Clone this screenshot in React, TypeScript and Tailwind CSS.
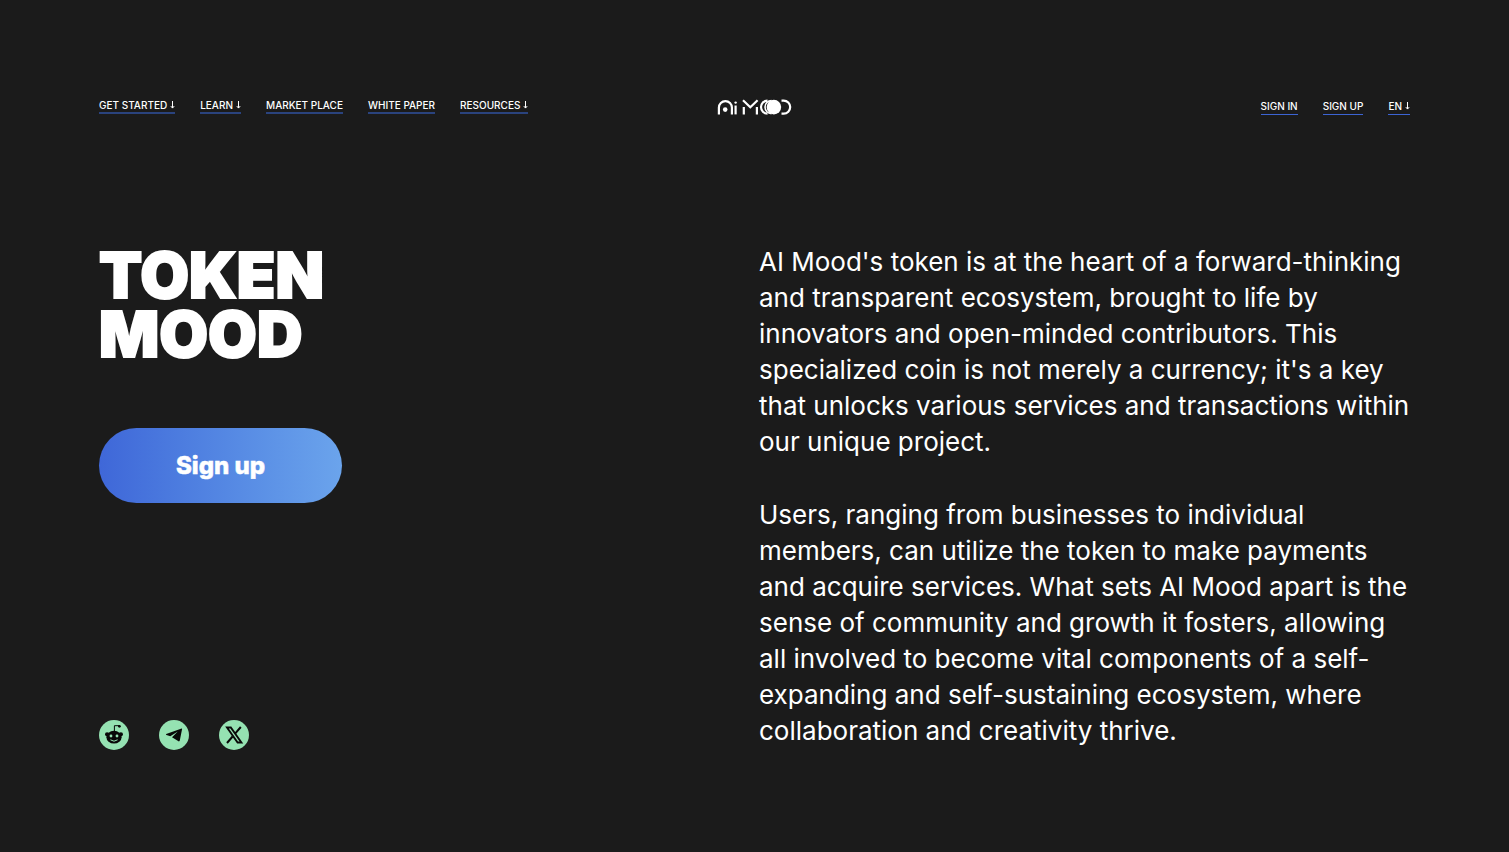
const mainLinks = [
  { label: "GET STARTED", menu: true },
  { label: "LEARN", menu: true },
  { label: "MARKET PLACE", menu: false },
  { label: "WHITE PAPER", menu: false },
  { label: "RESOURCES", menu: true },
];

function DownArrow() {
  return (
    <svg viewBox="0 0 5 8" className="mb-px h-2 w-[5px]" fill="none" stroke="currentColor" aria-hidden="true">
      <path d="M2.5 0v7" strokeWidth="1" />
      <path d="M0.8 5.1L2.5 7.1L4.2 5.1" strokeWidth="1" />
    </svg>
  );
}

function Logo() {
  return (
    <svg viewBox="717 98 76 17" className="h-[17px] w-[76px]" fill="none" stroke="white" strokeWidth="2.2" role="img" aria-label="Ai Mood">
      <path d="M718.9 114.4v-6.8a6.5 6.5 0 0 1 13 0v6.8" />
      <circle cx="725.2" cy="109.6" r="2.3" fill="white" stroke="none" />
      <path d="M735.6 105.5v8.9" />
      <circle cx="735.6" cy="102.6" r="1.2" fill="white" stroke="none" />
      <path d="M743.8 107v7.4M756.9 107v7.4M743 100.3l7.3 7l7.3-7" />
      <path d="M767.5 100.6a6.5 6.5 0 0 0 0 13" />
      <path d="M771.5 100.6a6.5 6.5 0 0 0 0 13" strokeWidth="1.6" />
      <circle cx="773.9" cy="107.1" r="7.3" fill="white" stroke="none" />
      <path d="M781.5 100.6h2.2a6.5 6.5 0 0 1 0 13h-2.2" />
    </svg>
  );
}

function RedditAlien() {
  return (
    <svg viewBox="0 0 30 30" className="size-[30px]" aria-hidden="true">
      <path d="M15.4 12V5.7H20" fill="none" stroke="currentColor" strokeWidth="1" />
      <circle cx="20.4" cy="6.3" r="1.4" fill="currentColor" />
      <circle cx="8.1" cy="14.3" r="2.1" fill="currentColor" />
      <circle cx="21.9" cy="14.3" r="2.1" fill="currentColor" />
      <ellipse cx="15" cy="17.2" rx="7.6" ry="6.4" fill="currentColor" />
      <circle cx="12" cy="16" r="1.4" fill="#95e2b2" />
      <circle cx="18" cy="16" r="1.4" fill="#95e2b2" />
      <path d="M11.4 19.8Q15 22.6 18.6 19.8" fill="none" stroke="#95e2b2" strokeWidth="1" />
    </svg>
  );
}

function Telegram() {
  return (
    <svg viewBox="0 0 30 30" className="size-[30px]" aria-hidden="true">
      <path d="M22.6 8.6L7.2 13.9Q6.5 14.5 7.5 15L11.3 16.2L18.8 11.5L13 17.3L19.5 21.3Q20.5 21.7 20.8 20.6L23.1 9.1Q23.1 8.5 22.6 8.6Z" fill="currentColor" />
    </svg>
  );
}

function XMark() {
  return (
    <svg viewBox="0 0 30 30" className="size-[30px]" fill="none" stroke="currentColor" aria-hidden="true">
      <path d="M8 7.5h3.8L22.4 22.5h-3.8Z" strokeWidth="1.9" />
      <path d="M21.8 7L16.3 13.3M13.6 16.5L8 23" strokeWidth="2" />
    </svg>
  );
}

const social = "flex size-[30px] items-center justify-center rounded-full bg-[#95e2b2] text-[#080808]";
const account = "flex h-[17px] items-center gap-[3px] border-b border-[#3c64d4] text-[10px] font-medium";

export default function App() {
  return (
    <div className="min-h-screen bg-[#1b1b1b] px-[99px] pt-[98px] pb-[101px] font-['Inter',sans-serif] text-white">
      <header className="grid grid-cols-[1fr_auto_1fr] items-start">
        <nav aria-label="Main" className="flex gap-[25px]">
          {mainLinks.map(({ label, menu }) => (
            <a key={label} href="#" className="flex h-4 items-center gap-[3px] border-b-2 border-[#2a437e] text-[10px] leading-[14px] font-medium whitespace-nowrap">
              {label}
              {menu && <DownArrow />}
            </a>
          ))}
        </nav>
        <a href="#" aria-label="Home"><Logo /></a>
        <nav aria-label="Account" className="flex justify-end gap-[25px]">
          <a href="#" className={account}>SIGN IN</a>
          <a href="#" className={account}>SIGN UP</a>
          <button type="button" className={account}>EN <DownArrow /></button>
        </nav>
      </header>

      <main className="mt-[129px] grid grid-cols-2 gap-[9px]">
        <section className="flex flex-col items-start">
          <h1 className="mt-0.5 flex flex-col text-[63px] leading-[59px] font-black [-webkit-text-stroke:2px_white]">
            <span>TOKEN</span>
            <span>MOOD</span>
          </h1>
          <button type="button" className="mt-16 h-[75px] w-[243px] rounded-full bg-linear-to-r from-[#3f67d8] to-[#6ba4ec] text-2xl font-extrabold [-webkit-text-stroke:0.5px_white]">
            Sign up
          </button>
          <div className="mt-auto flex gap-[30px]">
            <a href="#" aria-label="Reddit" className={social}><RedditAlien /></a>
            <a href="#" aria-label="Telegram" className={social}><Telegram /></a>
            <a href="#" aria-label="X" className={social}><XMark /></a>
          </div>
        </section>
        <section className="flex flex-col gap-[37px] pb-px text-[26px] leading-9">
          <p>
            AI Mood's token is at the heart of a forward-thinking and transparent ecosystem, brought to life by innovators and open-minded contributors. This specialized coin is not merely a currency; it's a key that unlocks various services and transactions within our unique project.
          </p>
          <p>
            Users, ranging from businesses to individual members, can utilize the token to make payments and acquire services. What sets AI Mood apart is the sense of community and growth it fosters, allowing all involved to become vital components of a self-expanding and self-sustaining ecosystem, where collaboration and creativity thrive.
          </p>
        </section>
      </main>
    </div>
  );
}
